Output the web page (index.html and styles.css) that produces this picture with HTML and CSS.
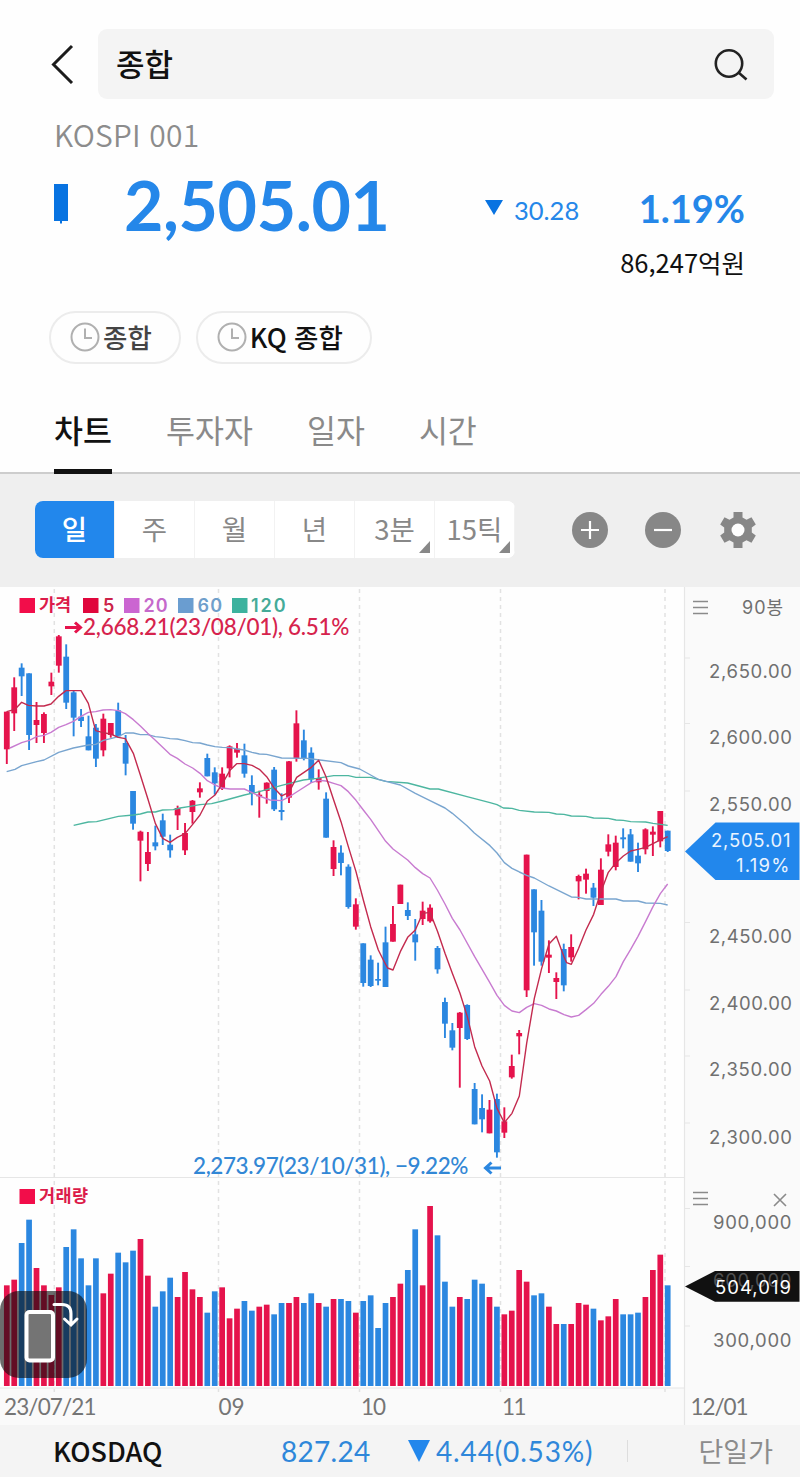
FILE: index.html
```html
<!DOCTYPE html>
<html lang="ko">
  <head>
    <meta charset="UTF-8" />
    <meta name="viewport" content="width=device-width, initial-scale=1.0" />
    <title>KOSPI 종합</title>
    <link rel="stylesheet" href="styles.css">
  </head>
  <body>
    <header class="search-row">
      <svg class="back" viewBox="0 0 24 40" width="24" height="40"><path d="M21 2 2.500 20.500 21 39" /></svg>
      <div class="search-box">
        <span>종합</span>
        <svg viewBox="0 0 36 36" width="36" height="36"><circle cx="16" cy="17.500" r="13.200" /><path d="M25.500 26.500 33.500 33.500" /></svg>
      </div>
    </header>

    <section class="quote">
      <div class="code">KOSPI 001</div>
      <div class="price-row">
        <svg class="mini-candle" viewBox="0 0 14 40" width="14" height="40"><path d="M0 0h14v37H8v2.500H6V37H0z" /></svg>
        <strong class="price">2,505.01</strong>
        <svg class="down" viewBox="0 0 18 15" width="18" height="15"><path d="M0 0h18L9 15z" /></svg>
        <span class="diff">30.28</span>
        <strong class="rate">1.19%</strong>
      </div>
      <div class="amount">86,247억원</div>
    </section>

    <div class="recent">
      <div class="chip">
        <svg viewBox="0 0 30 30" width="30" height="30"><circle cx="15" cy="15" r="13.500" /><path d="M15 6.500v9.500h7" /></svg>
        <span class="muted">종합</span>
      </div>
      <div class="chip">
        <svg viewBox="0 0 30 30" width="30" height="30"><circle cx="15" cy="15" r="13.500" /><path d="M15 6.500v9.500h7" /></svg>
        <span>KQ 종합</span>
      </div>
    </div>

    <nav class="tabs">
      <a class="tab active">차트</a>
      <a class="tab">투자자</a>
      <a class="tab">일자</a>
      <a class="tab">시간</a>
    </nav>

    <div class="toolbar">
      <div class="periods">
        <button class="active">일</button>
        <button>주</button>
        <button>월</button>
        <button>년</button>
        <button class="more">3분</button>
        <button class="more">15틱</button>
      </div>
      <div class="tools">
        <svg viewBox="0 0 36 36" width="36" height="36"><circle cx="18" cy="18" r="18" /><path class="sign" d="M9 18h18M18 9v18" /></svg>
        <svg viewBox="0 0 36 36" width="36" height="36"><circle cx="18" cy="18" r="18" /><path class="sign" d="M9 18h18" /></svg>
        <svg viewBox="0 0 36 36" width="36" height="36"><path d="M13.500 0h9v5.500l4 2.300 5-2.600 4.300 7.300-4 3v5l4 3-4.300 7.300-5-2.600-4 2.300V36h-9v-5.500l-4-2.300-5 2.600L.2 23.500l4-3v-5l-4-3 4.300-7.300 5 2.600 4-2.300z" /><circle class="hole" cx="18" cy="18" r="6.500" /></svg>
      </div>
    </div>

    <main class="chart">
      <svg id="chart" viewBox="0 587 800 838" width="800" height="838">
        <rect class="axis-bg" x="684" y="587" width="116" height="838" />
        <rect class="axis-bg" x="0" y="1388" width="684" height="37" />
        <path class="frame" d="M684.500 587v838M0 1177.500h684M0 1388h684M684 658h6M684 723.500h6M684 791h6M684 922.500h6M684 990h6M684 1056h6M684 1123h6M684 1208.500h6M684 1266.500h6M684 1326h6" />
        <path class="month" d="M54.300 589v803M218.500 589v803M359.500 589v803M500.500 589v803M665 589v803" />
        <g id="candles"></g>
        <g id="averages" transform="translate(0 585) scale(.33333)"></g>
        <g id="volumes"></g>

        <!-- Legend -->
        <g class="legend">
          <rect x="19.500" y="598" width="15.500" height="15" fill="#f20d4a" />
          <text class="kr" x="39" y="611" textLength="32" fill="#dc1b4a">가격</text>
          <rect x="83" y="598" width="15.500" height="15" fill="#e0063c" />
          <text x="103" y="612" textLength="11" fill="#cc2148">5</text>
          <rect x="124" y="598" width="15.500" height="15" fill="#cb65d1" />
          <text x="143.500" y="612" textLength="24" fill="#c569cb">20</text>
          <rect x="178" y="598" width="15.500" height="15" fill="#6a9dd0" />
          <text x="197.500" y="612" textLength="24.500" fill="#6f9fcb">60</text>
          <rect x="232" y="598" width="15.500" height="15" fill="#3cb29e" />
          <text x="251" y="612" textLength="34.500" fill="#45ab98">120</text>
          <rect x="19.500" y="1189" width="15.500" height="15" fill="#f20d4a" />
          <text class="kr" x="39" y="1202" textLength="49" fill="#dc1b4a">거래량</text>
        </g>

        <!-- High and low of the visible range -->
        <g class="mark high">
          <path d="M65 627.500h15M75 622.500l5.500 5-5.500 5" />
          <text x="83" y="634.500" textLength="266.500">2,668.21(23/08/01), 6.51%</text>
        </g>
        <g class="mark low">
          <text x="193" y="1173.500" textLength="275.500">2,273.97(23/10/31), −9.22%</text>
          <path d="M501 1168h-14M491.500 1162.500l-6 5.500 6 5.500" />
        </g>

        <!-- Price axis -->
        <path class="icon" d="M693 601.500h15M693 607.500h15M693 613.500h15M693 1192.500h15M693 1198.500h15M693 1204.500h15M774 1194l12 12M786 1194l-12 12" />
        <g class="axis">
          <text class="kr" x="742" y="614" textLength="41">90봉</text>
          <text x="709" y="678" textLength="83">2,650.00</text>
          <text x="709" y="743.500" textLength="83">2,600.00</text>
          <text x="709" y="811" textLength="83">2,550.00</text>
          <text x="709" y="942.500" textLength="83">2,450.00</text>
          <text x="709" y="1010" textLength="83">2,400.00</text>
          <text x="709" y="1076" textLength="83">2,350.00</text>
          <text x="709" y="1143.500" textLength="83">2,300.00</text>
          <text x="713" y="1228.500" textLength="78.500">900,000</text>
          <text x="713" y="1346.500" textLength="78.500">300,000</text>
        </g>
        <path fill="#2287ec" d="M685 851.500 715.500 822.500H799.500V880H715.500z" />
        <g class="axis tag">
          <text x="711" y="847" textLength="79.500">2,505.01</text>
          <text x="736" y="872" textLength="53.500">1.19%</text>
        </g>
        <path fill="#111" d="M685 1286.500 715 1271H799.500V1301.700H715z" />
        <g class="axis tag">
          <text x="713" y="1286.500" textLength="78.500" fill="#505050">600,000</text>
          <text x="715" y="1293.500" textLength="76" fill="#fff">504,019</text>
        </g>

        <!-- Dates -->
        <g class="dates">
          <text x="4" y="1415" textLength="92.500">23/07/21</text>
          <text x="218.500" y="1415" textLength="26">09</text>
          <text x="361" y="1415" textLength="25">10</text>
          <text x="502" y="1415" textLength="24.500">11</text>
          <text x="690.500" y="1415" textLength="58">12/01</text>
        </g>

        <!-- Rotate button -->
        <g class="rotate">
          <rect class="plate" x="0" y="1291" width="87" height="87" rx="19" />
          <rect class="phone" x="26.500" y="1312" width="26.500" height="48.500" rx="3" />
          <path d="M54 1304.500h8q9 0 9 9v11M64.500 1319l6.500 6 6-6" />
        </g>
      </svg>
    </main>

    <footer class="ticker">
      <span class="name">KOSDAQ</span>
      <span class="value">827.24</span>
      <svg viewBox="0 0 22 22" width="22" height="22"><path d="M0 0h22L11 22z" /></svg>
      <span class="change">4.44(0.53%)</span>
      <span class="single">단일가</span>
    </footer>

    <script src="chart.js"></script>
  </body>
</html>
```
FILE: styles.css
```css
* {
  margin: 0;
  padding: 0;
  box-sizing: border-box;
}

body {
  width: 800px;
  background: #fefefe;
  color: #111;
  font-family: "Noto Sans CJK KR", sans-serif;
}

svg {
  display: block;
  flex: none;
}

.search-row {
  display: flex;
  align-items: center;
  height: 99px;
  padding: 29px 26px 0 51px;
}

.back {
  margin-right: 23px;
  fill: none;
  stroke: #1c1c1c;
  stroke-width: 3;
}

.search-box {
  display: flex;
  flex: 1;
  align-items: center;
  justify-content: space-between;
  height: 70px;
  padding: 0 25px 0 18px;
  border-radius: 9px;
  background: #f4f4f4;
  font-size: 31px;
  font-weight: 500;
  line-height: 67px;
}

.search-box span {
  height: 70px;
}

.search-box svg {
  fill: none;
  stroke: #222;
  stroke-width: 2.6;
}

.quote {
  height: 212px;
  padding: 17px 55px 0 54px;
}

.code {
  height: 41px;
  color: #8c8c8c;
  font-size: 30px;
  font-weight: 350;
  letter-spacing: 0.2px;
  line-height: 37px;
}

.price-row {
  display: flex;
  align-items: center;
  height: 93px;
  color: #2587e9;
  font-family: Lato, sans-serif;
}

.mini-candle {
  fill: #0873e1;
  margin-right: 56px;
}

.price {
  width: 361px;
  padding-top: 2px;
  font-size: 68px;
  letter-spacing: -0.4px;
  line-height: 93px;
}

.down {
  margin: 8px 11px 0 0;
  fill: #0873e1;
}

.diff {
  width: 100px;
  padding-top: 12px;
  font-size: 25.500px;
}

.rate {
  flex: 1;
  padding-top: 9px;
  font-size: 38px;
  text-align: right;
}

.amount {
  font-size: 25.500px;
  line-height: 23px;
  text-align: right;
}

.recent {
  display: flex;
  gap: 15px;
  height: 53px;
  padding-left: 49px;
}

.chip {
  display: flex;
  align-items: center;
  height: 53px;
  padding: 0 27px 0 19px;
  border: 2px solid #ececec;
  border-radius: 27px;
  font-size: 26.500px;
  font-weight: 500;
  line-height: 47px;
}

.chip span {
  height: 49px;
}

.chip svg {
  margin: -2px 3px 0 0;
  fill: none;
  stroke: #b0b0b0;
  stroke-width: 2;
}

.chip .muted {
  color: #444;
}

.tabs {
  display: flex;
  gap: 54px;
  height: 110px;
  padding: 36px 0 0 54px;
  border-bottom: 2px solid #cdcdcd;
}

.tab {
  height: 74px;
  color: #8a8a8a;
  font-size: 31.500px;
  line-height: 59px;
}

.tab.active {
  border-bottom: 5px solid #111;
  color: #111;
  font-weight: 500;
}

.toolbar {
  display: flex;
  justify-content: space-between;
  height: 113px;
  padding: 27px 44px 0 35px;
  background: #efefef;
}

.periods {
  display: flex;
  height: 57px;
  overflow: hidden;
  border-radius: 8px;
  background: #fff;
}

.periods button {
  position: relative;
  width: 80px;
  padding-bottom: 2px;
  border: none;
  border-right: 1px solid #f2f2f2;
  background: #fff;
  color: #888;
  font-family: inherit;
  font-size: 27.500px;
  line-height: 55px;
}

.periods .active {
  background: #2287ec;
  color: #fff;
  font-weight: 500;
}

.more::after {
  content: "";
  position: absolute;
  right: 4px;
  bottom: 5px;
  border-bottom: 12px solid #888;
  border-left: 11px solid transparent;
}

.tools {
  display: flex;
  gap: 37px;
  padding-top: 11px;
}

.tools svg {
  fill: #878787;
}

.tools svg:last-child {
  margin-left: 2px;
}

.tools .sign {
  fill: none;
  stroke: #fff;
  stroke-width: 2.2;
}

.tools .hole {
  fill: #fefefe;
}

/* Chart */
.chart {
  height: 838px;
}

.axis-bg {
  fill: #fafafa;
}

.frame {
  fill: none;
  stroke: #e6e6e6;
  stroke-width: 1.2;
}

.month {
  fill: none;
  stroke: #e2e2e2;
  stroke-width: 1.5;
  stroke-dasharray: 4 4;
}

.up {
  fill: #e5134c;
}

.fall {
  fill: #2b87e0;
}

#averages polyline {
  fill: none;
  stroke-width: 4.2;
  stroke-linejoin: round;
}

.legend {
  font: 600 18px Inter, sans-serif;
}

.legend .kr {
  font: 700 17.500px "Noto Sans CJK KR", sans-serif;
}

.mark {
  font: 500 22.500px Lato, "Noto Sans CJK KR", sans-serif;
}

.mark path {
  fill: none;
  stroke-width: 3;
}

.high {
  fill: #d6234d;
}

.high path {
  stroke: #e5134c;
}

.low {
  fill: #3287d5;
}

.low path {
  stroke: #2b87e0;
}

.icon {
  stroke: #8a8a8a;
  stroke-width: 1.6;
}

.axis {
  fill: #707070;
  font: 400 18.500px Inter, sans-serif;
}

.axis .kr {
  font: 400 18px Inter, "Noto Sans CJK KR", sans-serif;
}

.tag {
  fill: #eaf4ff;
}

.dates {
  fill: #757575;
  font: 400 22.500px Lato, sans-serif;
}

.rotate {
  fill: none;
  stroke: #fff;
  stroke-width: 3;
  stroke-linecap: round;
}

.plate {
  fill: rgba(10, 10, 10, 0.6);
  stroke: none;
}

.phone {
  fill: #747474;
  stroke-width: 4;
}

/* Bottom ticker */
.ticker {
  display: flex;
  align-items: center;
  height: 52px;
  padding: 0 27px 0 53px;
  background: #f4f4f4;
  color: #2f87da;
  font-family: Lato, sans-serif;
  font-size: 28px;
  line-height: 52px;
}

.ticker .name {
  width: 228px;
  color: #111;
  font-family: "Noto Sans CJK KR", sans-serif;
  font-size: 27px;
  font-weight: 500;
}

.ticker .value {
  width: 127px;
  letter-spacing: 0.3px;
}

.ticker svg {
  margin-right: 6px;
  fill: #2287ec;
}

.ticker .change {
  width: 192px;
  height: 22px;
  border-right: 1px solid #ddd;
  letter-spacing: 0.85px;
  line-height: 22px;
}

.ticker .single {
  flex: 1;
  color: #8c8c8c;
  font-family: "Noto Sans CJK KR", sans-serif;
  font-size: 27px;
  text-align: right;
}
```
FILE: chart.js
```js
// One row per day: direction, high, body top, body bottom, low, volume.
// Values are in thirds of a pixel, prices are measured down from y = 585.
const days = [
  ["r", 380, 380, 493, 537, 302], ["r", 277, 307, 385, 438, 319],
  ["b", 235, 248, 274, 333, 429], ["b", 265, 265, 450, 495, 499],
  ["r", 351, 405, 420, 474, 354], ["r", 382, 387, 444, 474, 302],
  ["r", 263, 290, 304, 330, 273], ["r", 150, 154, 242, 263, 296],
  ["b", 178, 215, 353, 372, 417], ["b", 318, 322, 398, 454, 470],
  ["b", 372, 395, 408, 426, 383], ["b", 392, 454, 496, 496, 302],
  ["b", 417, 428, 521, 546, 383], ["r", 386, 401, 496, 514, 278],
  ["r", 414, 414, 450, 458, 337], ["b", 353, 376, 454, 458, 400],
  ["b", 450, 474, 536, 571, 371], ["b", 618, 618, 716, 734, 406],
  ["r", 737, 740, 767, 889, 441], ["r", 741, 801, 837, 858, 331],
  ["b", 722, 772, 784, 796, 238], ["b", 686, 706, 755, 780, 284],
  ["b", 749, 779, 796, 818, 325], ["r", 662, 669, 691, 735, 267],
  ["r", 714, 744, 796, 810, 342], ["r", 645, 647, 681, 716, 290],
  ["r", 592, 610, 622, 638, 267], ["b", 506, 519, 574, 574, 220],
  ["b", 547, 562, 595, 629, 284], ["r", 547, 566, 611, 615, 296],
  ["r", 481, 484, 550, 577, 203], ["r", 474, 491, 503, 518, 232],
  ["b", 476, 511, 566, 578, 255], ["b", 571, 600, 626, 661, 226],
  ["r", 617, 629, 634, 698, 238], ["r", 592, 593, 618, 656, 244],
  ["b", 546, 554, 673, 678, 215], ["b", 625, 675, 681, 706, 249],
  ["r", 528, 529, 638, 654, 249], ["r", 376, 415, 520, 530, 267],
  ["b", 434, 466, 520, 526, 249], ["b", 487, 503, 583, 594, 278],
  ["r", 553, 579, 592, 614, 249], ["b", 622, 641, 758, 758, 238],
  ["r", 766, 786, 852, 873, 261], ["b", 781, 803, 834, 871, 261],
  ["b", 838, 845, 966, 971, 255], ["r", 940, 958, 1025, 1034, 220],
  ["b", 1075, 1075, 1194, 1205, 255], ["b", 1111, 1124, 1203, 1206, 272],
  ["b", 1133, 1182, 1187, 1201, 174], ["b", 1025, 1072, 1206, 1206, 249],
  ["r", 963, 1017, 1070, 1070, 267], ["r", 899, 899, 957, 957, 307],
  ["b", 952, 975, 993, 1005, 348], ["b", 1002, 1048, 1072, 1127, 470],
  ["r", 950, 977, 1002, 1020, 302], ["r", 958, 968, 1009, 1013, 540],
  ["b", 1083, 1089, 1153, 1166, 452], ["b", 1238, 1251, 1316, 1359, 313],
  ["b", 1314, 1336, 1388, 1396, 238], ["r", 1281, 1283, 1329, 1508, 267],
  ["b", 1258, 1260, 1362, 1365, 261], ["b", 1494, 1512, 1618, 1618, 319],
  ["b", 1528, 1569, 1603, 1642, 307], ["r", 1545, 1574, 1645, 1645, 267],
  ["b", 1526, 1542, 1702, 1718, 238], ["r", 1567, 1609, 1643, 1659, 215],
  ["r", 1409, 1443, 1477, 1481, 226], ["r", 1335, 1344, 1354, 1408, 348],
  ["r", 809, 809, 1216, 1236, 313], ["b", 913, 913, 1042, 1142, 272],
  ["b", 945, 977, 1130, 1142, 278], ["r", 1066, 1109, 1118, 1164, 238],
  ["r", 1162, 1179, 1191, 1242, 186], ["b", 1076, 1092, 1201, 1219, 186],
  ["r", 1048, 1086, 1117, 1130, 186], ["r", 869, 873, 889, 943, 249],
  ["r", 851, 866, 884, 926, 244], ["b", 894, 908, 938, 963, 232],
  ["r", 820, 854, 960, 960, 197], ["r", 748, 778, 800, 814, 209],
  ["r", 752, 773, 846, 856, 261], ["b", 730, 757, 763, 790, 215],
  ["b", 732, 748, 830, 830, 215], ["b", 773, 812, 835, 861, 220],
  ["r", 730, 733, 793, 808, 267], ["r", 724, 740, 749, 813, 348],
  ["r", 678, 678, 769, 787, 394], ["b", 737, 737, 798, 801, 302]
];

// Moving averages, as x,y points on the same scale
const averages = [
  // 120
  { color: "#4db6a0", points: "221,721 265,711 290,710 355,694 400,690 421,687 443,681 466,681 488,675 520,674 540,669 570,664 600,659 635,656 667,648 733,630 778,620 845,601 910,585 950,580 1001,572 1045,572 1068,577 1112,577 1157,589 1223,594 1268,606 1290,612 1315,612 1401,635 1470,653 1491,659 1510,669 1536,670 1558,676 1603,681 1647,682 1669,687 1692,688 1714,693 1758,694 1781,699 1825,700 1848,705 1870,706 1892,710 1937,711 1959,715 2003,721" },
  // 60
  { color: "#79a5cf", points: "20,560 45,553 65,542 110,530 132,525 176,502 220,489 265,480 287,478 310,466 332,461 355,455 376,444 400,444 421,449 443,449 466,455 488,457 510,461 532,462 555,467 578,473 600,474 622,480 645,485 667,487 690,488 711,492 733,495 756,502 778,507 800,508 845,519 923,520 960,525 1023,533 1045,543 1079,552 1112,570 1135,583 1201,600 1246,625 1290,647 1335,669 1357,685 1401,722 1423,744 1470,782 1491,804 1513,833 1536,850 1558,861 1580,871 1603,879 1647,903 1714,936 1736,937 1758,942 1848,942 1870,948 1914,948 1937,954 1981,955 2003,960" },
  // 20
  { color: "#c87bd0", points: "30,489 65,473 88,466 110,455 132,451 153,442 176,427 198,419 220,409 243,394 265,382 287,380 309,375 332,374 355,377 376,386 400,404 421,423 443,445 466,466 488,487 510,508 532,520 555,537 578,549 600,565 622,587 645,600 666,609 690,612 733,612 756,623 778,633 810,645 845,647 867,636 890,621 934,593 956,586 978,588 1001,595 1023,602 1045,620 1068,646 1090,675 1112,703 1135,737 1157,769 1179,792 1223,825 1246,848 1268,866 1290,879 1312,915 1335,957 1357,1000 1380,1035 1424,1115 1469,1192 1491,1231 1513,1261 1536,1278 1558,1283 1580,1267 1603,1256 1625,1261 1647,1272 1669,1278 1692,1289 1714,1296 1736,1291 1758,1274 1781,1255 1803,1228 1825,1204 1848,1175 1870,1130 1892,1093 1914,1054 1937,1009 1959,965 1981,926 2003,897" },
  // 5
  { color: "#c32a4e", points: "20,380 45,373 65,352 85,361 110,363 132,363 153,357 176,334 198,317 243,317 265,355 287,437 309,443 332,447 355,457 376,461 400,505 421,570 443,640 466,715 488,760 510,772 532,757 555,746 578,718 600,690 622,648 645,630 667,596 690,556 710,536 733,536 756,541 778,553 800,575 823,610 845,633 867,622 890,577 934,547 956,526 978,575 1001,645 1023,710 1045,785 1068,860 1090,945 1112,1025 1135,1095 1150,1125 1163,1149 1179,1155 1201,1100 1223,1057 1246,1035 1268,985 1290,982 1313,1040 1335,1105 1357,1165 1380,1225 1402,1295 1424,1385 1446,1443 1469,1488 1491,1570 1513,1613 1536,1585 1558,1533 1580,1375 1603,1240 1625,1150 1647,1077 1669,1054 1692,1115 1700,1133 1714,1138 1736,1090 1758,1035 1781,988 1803,920 1825,862 1848,833 1870,813 1892,798 1914,793 1937,787 1959,776 1981,765 2003,755" }
];

const firstX = 6.8;
const step = 7.426;
const volumeBase = 1386;

function addShape(parentId, name, attributes) {
  const shape = document.createElementNS("http://www.w3.org/2000/svg", name);
  Object.entries(attributes).forEach(([key, value]) => shape.setAttribute(key, value));
  document.getElementById(parentId).appendChild(shape);
}

function addBar(parentId, className, x, width, top, bottom) {
  addShape(parentId, "rect", {
    class: className,
    x: x - width / 2,
    y: top,
    width: width,
    height: bottom - top
  });
}

averages.forEach(({ color, points }) => {
  addShape("averages", "polyline", { points: points, stroke: color });
});

days.forEach(([direction, high, top, bottom, low, volume], index) => {
  const x = firstX + index * step;
  const className = direction === "r" ? "up" : "fall";
  addBar("candles", className, x, 1.9, 585 + high / 3, 585 + low / 3);
  addBar("candles", className, x, 5.8, 585 + top / 3, 585 + bottom / 3);
  addBar("volumes", className, x, 5.7, volumeBase - volume / 3, volumeBase);
});
```
